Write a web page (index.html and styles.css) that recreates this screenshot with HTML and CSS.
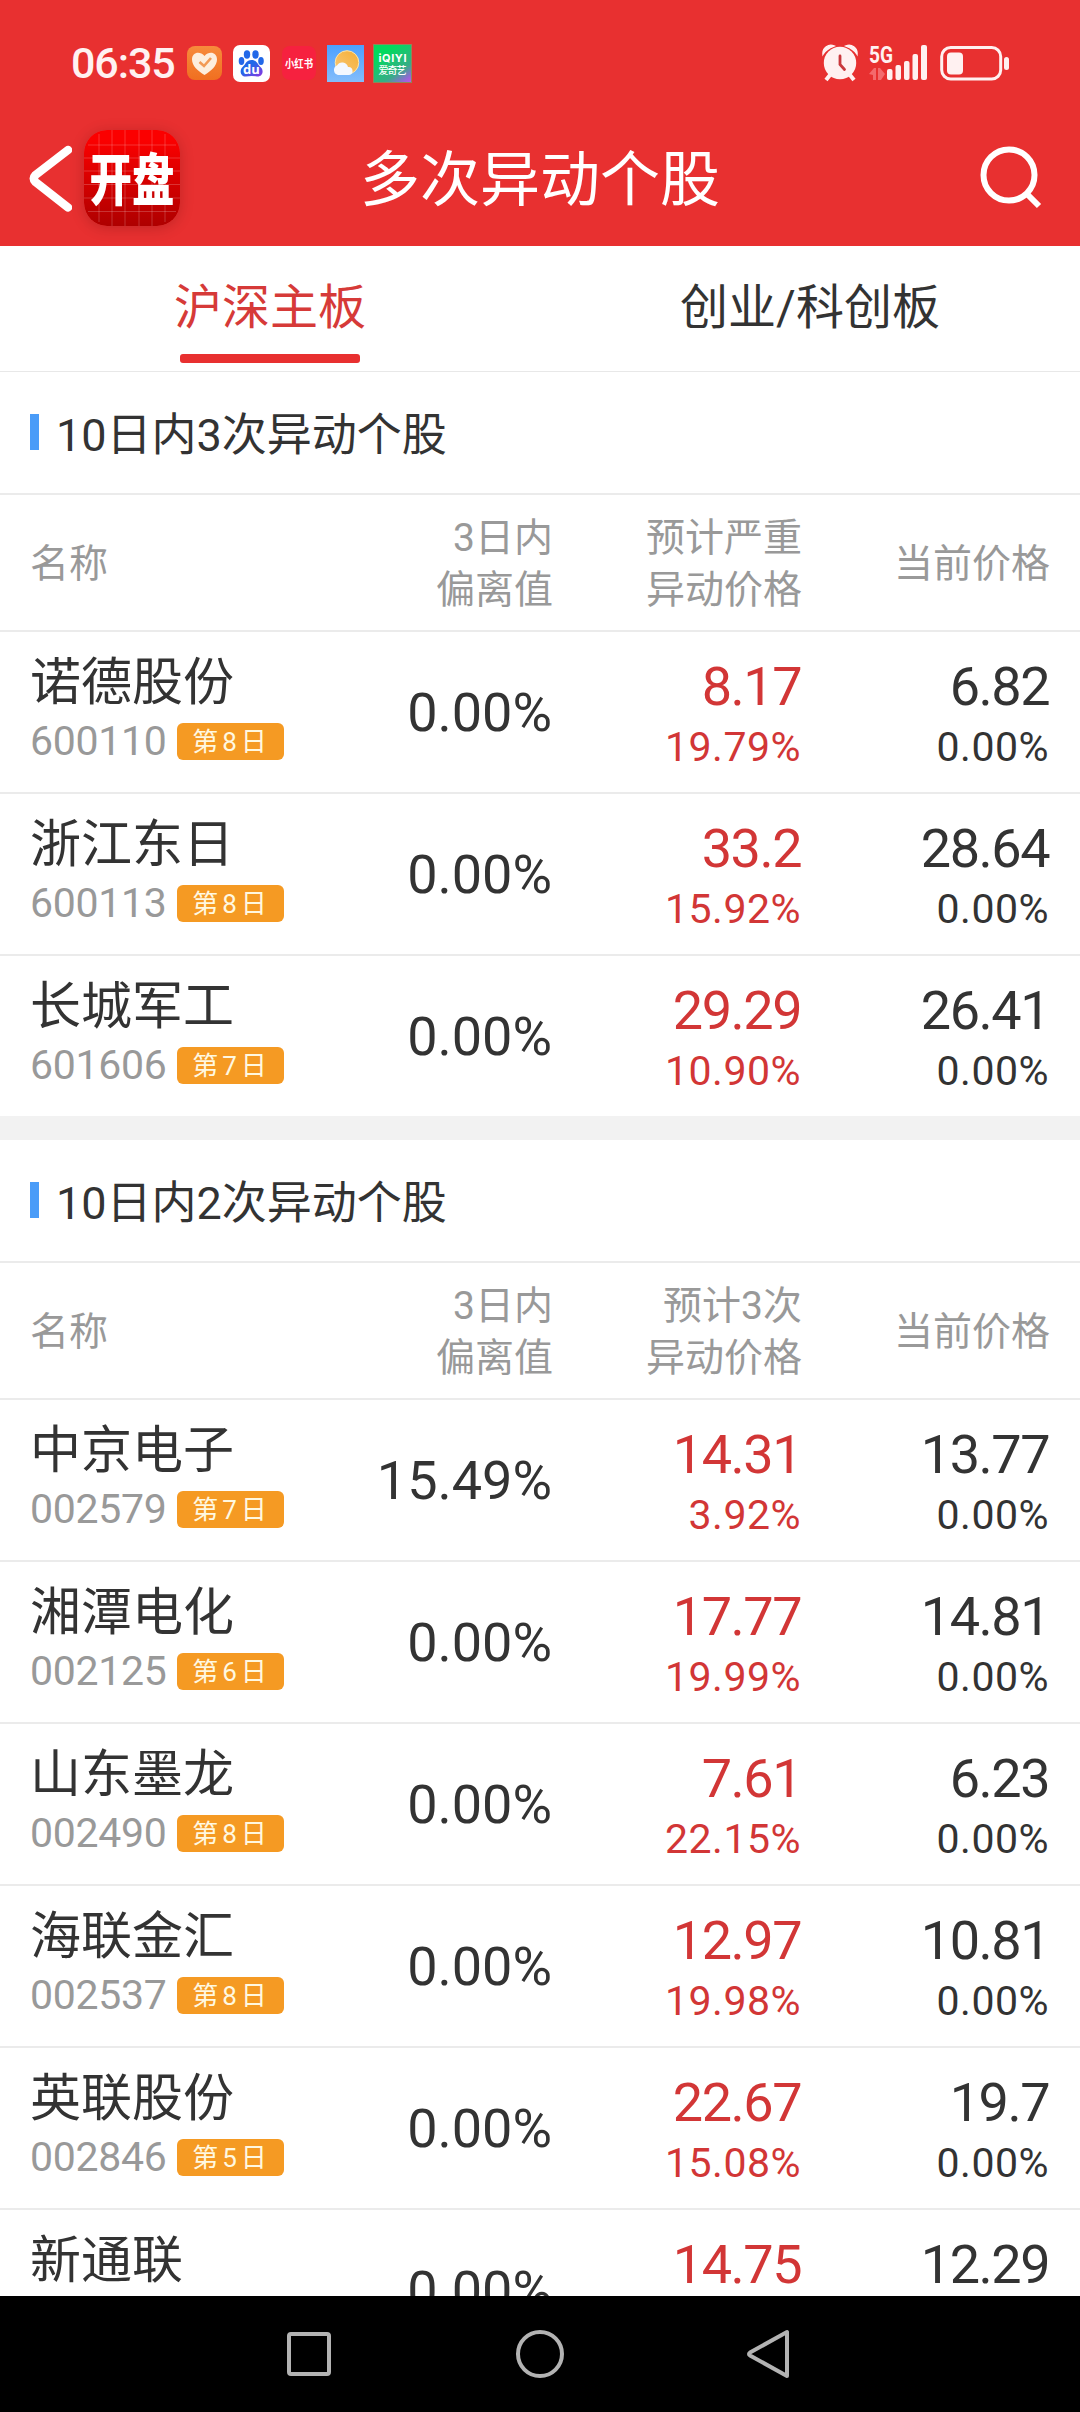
FILE: index.html
```html
<!DOCTYPE html>
<html lang="zh-CN">
<head>
<meta charset="utf-8">
<title>多次异动个股</title>
<link rel="stylesheet" href="styles.css">
</head>
<body>
<div class="screen">
  <header class="top">
    <div class="status">
      <span class="time">06:35</span>
      <div class="apps">
        <svg width="35" height="36" viewBox="0 0 35 36"><defs><linearGradient id="org" x1="0" y1="0" x2="0" y2="1"><stop offset="0" stop-color="#f78b3c"/><stop offset="1" stop-color="#f06f20"/></linearGradient></defs><rect y="1" width="35" height="34" rx="8" fill="url(#org)"/><path d="M17.500 30C11 26 5 21 5 14.500C5 7 13 5.500 17.500 11C22 5.500 30 7 30 14.500C30 21 24 26 17.500 30Z" fill="#fdeedd"/><path d="M12.500 17l4.500 4 7-8" fill="none" stroke="#f29a55" stroke-width="2.600"/></svg>
        <svg width="37" height="37" viewBox="0 0 37 37"><defs><linearGradient id="paw" x1="0" y1="0" x2="1" y2="1"><stop offset=".4" stop-color="#2268e8"/><stop offset="1" stop-color="#8d35e0"/></linearGradient></defs><rect width="37" height="37" rx="7" fill="#fff"/><g fill="#2268e8"><ellipse cx="14" cy="9.500" rx="3.200" ry="4.200"/><ellipse cx="22.500" cy="9.500" rx="3.200" ry="4.200"/><ellipse cx="8.500" cy="16" rx="2.800" ry="3.900"/><ellipse cx="28" cy="16" rx="2.800" ry="3.900"/></g><path d="M18.500 15C13 15 13 19 10 21.500C5.500 25.500 8 32 13 31.500Q18.500 30.500 24 31.500C29.500 32 31.500 25.500 27.500 22C24 19 24 15 18.500 15Z" fill="url(#paw)"/><text x="18.500" y="29" text-anchor="middle" class="du">du</text></svg>
        <svg width="34" height="36" viewBox="0 0 34 36"><rect y="1" width="34" height="34" rx="8" fill="#f6213f"/><text x="17" y="0" text-anchor="middle" class="xhs" transform="translate(0 22.500) scale(1 1.150)" textLength="28" lengthAdjust="spacingAndGlyphs">小红书</text></svg>
        <svg width="37" height="37" viewBox="0 0 37 37"><defs><linearGradient id="sky" x1="0" y1="0" x2="0" y2="1"><stop offset="0" stop-color="#4ba0ff"/><stop offset="1" stop-color="#84bdfb"/></linearGradient><linearGradient id="sun" x1="1" y1="0" x2="0" y2="1"><stop offset="0" stop-color="#f5ae35"/><stop offset="1" stop-color="#f8c878"/></linearGradient></defs><rect width="37" height="37" fill="url(#sky)"/><circle cx="20" cy="17.500" r="11.800" fill="url(#sun)" stroke="#ffe6a8" stroke-width="1"/><path d="M11 30a5 5 0 0 1-1-9.500a6 6 0 0 1 11 1.500a4 4 0 0 1 1 8Z" fill="#f3f8ff"/></svg>
        <svg width="39" height="39" viewBox="0 0 39 39"><defs><linearGradient id="iq" x1=".3" y1="0" x2="1" y2="1"><stop offset=".15" stop-color="#03d95e"/><stop offset=".65" stop-color="#36ad86"/><stop offset=".85" stop-color="#8a6ed0"/><stop offset="1" stop-color="#c94df0"/></linearGradient></defs><rect x=".5" y=".5" width="38" height="38" fill="url(#iq)" stroke="#8f8758"/><text x="19.500" y="18" text-anchor="middle" class="iq" textLength="28">iQIYI</text><text x="19.500" y="30" text-anchor="middle" class="iq2" textLength="28">爱奇艺</text></svg>
      </div>
      <div class="signals">
        <svg width="36" height="38" viewBox="0 0 36 38"><g fill="#fff1f1"><path d="M1 10A8 8 0 0 1 12 2Q4 5 1 10ZM35 10A8 8 0 0 0 24 2Q32 5 35 10Z" stroke="#fff1f1" stroke-width="1.500"/><circle cx="18" cy="19" r="16.200"/></g><path d="M8 31l-4 5M28 31l4 5" stroke="#fff1f1" stroke-width="4"/><path d="M18 12v8.500l4.500 5" fill="none" stroke="#c9383c" stroke-width="2.800" stroke-linecap="round"/></svg>
        <svg class="net" width="60" height="38" viewBox="0 0 60 38"><text x="0" y="18.500" class="g5" textLength="24" lengthAdjust="spacingAndGlyphs">5G</text><path d="M0 30l5-6h2v12H4v-5ZM16 30l-5-6H9v12h3z" fill="#f46a6d"/><g fill="#fff1f1"><rect x="18" y="25" width="5.500" height="11" rx="2"/><rect x="26.500" y="21" width="5.500" height="15" rx="2"/><rect x="35" y="17" width="5.500" height="19" rx="2"/><rect x="43.500" y="10" width="5.500" height="26" rx="2"/><rect x="52" y="1" width="6" height="35" rx="2"/></g></svg>
        <svg width="70" height="36" viewBox="0 0 70 36"><rect x="1.700" y="2.500" width="59" height="31.500" rx="9" fill="none" stroke="#fff1f1" stroke-width="3"/><rect x="7" y="7.500" width="16" height="22" rx="4" fill="#fff1f1"/><rect x="64" y="12" width="5" height="13" rx="2.500" fill="#fff1f1"/></svg>
      </div>
    </div>
    <div class="titlebar">
      <div class="back">
        <svg width="44" height="68" viewBox="0 0 44 68"><path d="M40 6L7.500 31Q4 34.500 7.500 38L40 63.500" fill="none" stroke="#fff" stroke-width="8.500" stroke-linecap="round" stroke-linejoin="round"/></svg>
        <svg class="logo" width="96" height="96" viewBox="0 0 96 96"><defs><linearGradient id="lg" x1="0" y1="0" x2="0" y2="1"><stop offset=".1" stop-color="#fb0000"/><stop offset="1" stop-color="#ae0000"/></linearGradient></defs><rect width="96" height="96" rx="23" fill="url(#lg)"/><path d="M15 4V92M28 0V96M41 0V96M55 0V96M68 0V96M81 4V92M4 15H92M0 28H96M0 41H96M0 54.500H96M0 68H96M4 81.500H92" stroke="#fff" stroke-opacity=".2" stroke-width="1"/><text x="48" y="0" text-anchor="middle" class="kp" transform="translate(0 69.500) scale(1 1.320)">开盘</text></svg>
      </div>
      <h1>多次异动个股</h1>
      <svg class="search" width="64" height="66" viewBox="0 0 64 66"><circle cx="29" cy="30" r="25.500" fill="none" stroke="#fff" stroke-width="6"/><path d="M47 49L59 61" stroke="#fff" stroke-width="6"/></svg>
    </div>
  </header>
  <nav class="tabs"><div class="tab on"><span>沪深主板</span></div><div class="tab"><span>创业/科创板</span></div></nav>
  <main class="content">
    <section>
      <h2>10日内3次异动个股</h2>
      <div class="head"><div>名称</div><div>3日内<br>偏离值</div><div>预计严重<br>异动价格</div><div>当前价格</div></div>
      <div class="row"><div class="stock"><b>诺德股份</b><p>600110<i>第8日</i></p></div><div class="dev">0.00%</div><div class="quote up"><b>8.17</b><p>19.79%</p></div><div class="quote"><b>6.82</b><p>0.00%</p></div></div>
      <div class="row"><div class="stock"><b>浙江东日</b><p>600113<i>第8日</i></p></div><div class="dev">0.00%</div><div class="quote up"><b>33.2</b><p>15.92%</p></div><div class="quote"><b>28.64</b><p>0.00%</p></div></div>
      <div class="row last"><div class="stock"><b>长城军工</b><p>601606<i>第7日</i></p></div><div class="dev">0.00%</div><div class="quote up"><b>29.29</b><p>10.90%</p></div><div class="quote"><b>26.41</b><p>0.00%</p></div></div>
    </section>
    <section>
      <h2>10日内2次异动个股</h2>
      <div class="head"><div>名称</div><div>3日内<br>偏离值</div><div>预计3次<br>异动价格</div><div>当前价格</div></div>
      <div class="row"><div class="stock"><b>中京电子</b><p>002579<i>第7日</i></p></div><div class="dev">15.49%</div><div class="quote up"><b>14.31</b><p>3.92%</p></div><div class="quote"><b>13.77</b><p>0.00%</p></div></div>
      <div class="row"><div class="stock"><b>湘潭电化</b><p>002125<i>第6日</i></p></div><div class="dev">0.00%</div><div class="quote up"><b>17.77</b><p>19.99%</p></div><div class="quote"><b>14.81</b><p>0.00%</p></div></div>
      <div class="row"><div class="stock"><b>山东墨龙</b><p>002490<i>第8日</i></p></div><div class="dev">0.00%</div><div class="quote up"><b>7.61</b><p>22.15%</p></div><div class="quote"><b>6.23</b><p>0.00%</p></div></div>
      <div class="row"><div class="stock"><b>海联金汇</b><p>002537<i>第8日</i></p></div><div class="dev">0.00%</div><div class="quote up"><b>12.97</b><p>19.98%</p></div><div class="quote"><b>10.81</b><p>0.00%</p></div></div>
      <div class="row"><div class="stock"><b>英联股份</b><p>002846<i>第5日</i></p></div><div class="dev">0.00%</div><div class="quote up"><b>22.67</b><p>15.08%</p></div><div class="quote"><b>19.7</b><p>0.00%</p></div></div>
      <div class="row"><div class="stock"><b>新通联</b></div><div class="dev">0.00%</div><div class="quote up"><b>14.75</b></div><div class="quote"><b>12.29</b></div></div>
    </section>
  </main>
  <footer class="sysnav">
    <svg width="52" height="52" viewBox="0 0 52 52"><rect x="5" y="6" width="40" height="40" rx="2"/></svg>
    <svg width="52" height="52" viewBox="0 0 52 52"><circle cx="26" cy="26" r="22"/></svg>
    <svg width="52" height="52" viewBox="0 0 52 52"><path d="M43 4V48L6 27.500Q4 26 6 24.500Z"/></svg>
  </footer>
</div>
</body>
</html>
```
FILE: styles.css
```css
* { box-sizing: border-box; margin: 0; padding: 0; }
body {
  width: 1080px;
  height: 2412px;
  overflow: hidden;
  background: #fff;
  color: #333;
  font-family: Roboto, "Noto Sans CJK SC", sans-serif;
  font-weight: 400;
}
svg { display: block; flex: none; }
b, i, h1, h2 { font-weight: 400; font-style: normal; }

.screen { height: 2412px; display: flex; flex-direction: column; overflow: hidden; }

.top { height: 246px; flex: none; background: #e83030; color: #fff; }
.status { height: 126px; display: flex; align-items: center; padding: 0 70px 0 71px; }
.time { width: 116px; font-size: 43px; font-weight: 500; line-height: 50px; letter-spacing: -1.1px; color: #fff1f1; }
.apps { display: flex; align-items: center; gap: 10px; }
.apps svg:nth-child(2) { margin-left: 1px; }
.apps svg:nth-child(3) { margin-left: 2px; }
.apps svg:nth-child(4) { margin-left: 1px; }
.apps svg:nth-child(5) { margin-left: -1px; }
.signals { display: flex; align-items: center; gap: 11px; margin-left: auto; }
.net { overflow: visible; }
.du { font: 700 13px "Open Sans", sans-serif; fill: #fff; }
.xhs { font: 700 9.500px "Noto Sans CJK SC", sans-serif; fill: #fff; }
.iq { font: 700 11px Inter, sans-serif; fill: #fff; }
.iq2 { font: 500 10px "Noto Sans CJK SC", sans-serif; fill: #fff; }
.g5 { font: 700 24px Roboto, sans-serif; fill: #fff1f1; }
.kp { font: 900 42.500px "Noto Sans CJK SC", sans-serif; fill: #fff; }

.titlebar { height: 104px; display: grid; grid-template-columns: 1fr auto 1fr; align-items: center; padding: 0 36px 0 28px; }
.back { display: flex; align-items: center; gap: 12px; }
.logo { border-radius: 23px; box-shadow: 0 2px 14px rgba(60, 0, 0, .22); }
.titlebar h1 { font-size: 60px; line-height: 80px; padding: 6px 0 0 8px; }
.search { justify-self: end; }

.tabs { height: 126px; flex: none; display: flex; border-bottom: 1px solid #e8e8e8; font-size: 48px; }
.tab { flex: 1; display: flex; flex-direction: column; align-items: center; justify-content: space-between; padding: 27px 0 8px; line-height: 70px; }
.tab.on { color: #d63a38; }
.tab.on::after { content: ""; width: 180px; height: 9px; border-radius: 3px; background: #e83030; }

.content { flex: 1; min-height: 0; overflow: hidden; }
section + section { border-top: 24px solid #f2f2f2; }
h2 { height: 123px; display: flex; align-items: center; gap: 17px; padding: 0 30px 2px; font-size: 45px; border-bottom: 2px solid #ebebeb; }
h2::before { content: ""; width: 9px; height: 36px; background: #4a9cf8; }
.head, .row { display: grid; grid-template-columns: 271px 251px 249px 248px; padding: 0 31px 0 30px; border-bottom: 2px solid #ebebeb; text-align: right; }
.head { height: 137px; align-items: center; padding-top: 2px; padding-right: 30px; padding-left: 31px; font-size: 39px; line-height: 52px; color: #999; }
.head div:first-child { text-align: left; text-indent: -1px; }
.row { height: 162px; }
.row.last { height: 160px; border-bottom: 0; }
.stock { text-align: left; padding-top: 21px; }
.stock b { display: block; font-size: 51px; line-height: 60px; white-space: nowrap; }
.stock p { display: flex; align-items: center; font-size: 41px; line-height: 57px; letter-spacing: -.3px; color: #999; }
.stock i { margin-left: auto; margin-right: 17px; width: 107px; height: 37px; border-radius: 6px; background: #f59a23; color: #fff8e0; font-size: 26px; line-height: 38px; letter-spacing: 4px; padding-left: 2px; text-align: center; }
.dev { font-size: 54px; line-height: 162px; }
.quote { padding-top: 26px; }
.quote b { display: block; font-size: 54px; line-height: 58px; letter-spacing: -1.500px; }
.quote p { font-size: 41px; line-height: 62px; letter-spacing: .5px; }
.up { color: #d23636; }

.sysnav { height: 116px; flex: none; display: flex; justify-content: center; align-items: center; gap: 178px; background: #000; }
.sysnav svg { fill: none; stroke: #b3b3b3; stroke-width: 4; stroke-linejoin: round; }
```
